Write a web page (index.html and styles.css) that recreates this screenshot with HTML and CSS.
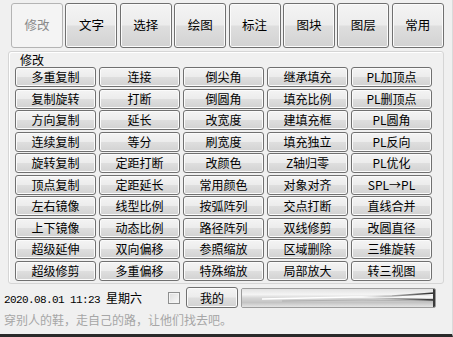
FILE: index.html
```html
<!DOCTYPE html>
<html lang="zh">
<head>
<meta charset="utf-8">
<title>工具箱</title>
<link rel="stylesheet" href="styles.css">
</head>
<body>
<div class="win">
  <div class="tabs">
    <button class="btn tab tab-off">修改</button>
    <button class="btn tab">文字</button>
    <button class="btn tab">选择</button>
    <button class="btn tab">绘图</button>
    <button class="btn tab">标注</button>
    <button class="btn tab">图块</button>
    <button class="btn tab">图层</button>
    <button class="btn tab">常用</button>
  </div>
  <div class="group">
    <div class="group-label">修改</div>
    <div class="grid">
      <button class="btn cell">多重复制</button><button class="btn cell">连接</button><button class="btn cell">倒尖角</button><button class="btn cell">继承填充</button><button class="btn cell">PL加顶点</button>
      <button class="btn cell">复制旋转</button><button class="btn cell">打断</button><button class="btn cell">倒圆角</button><button class="btn cell">填充比例</button><button class="btn cell">PL删顶点</button>
      <button class="btn cell">方向复制</button><button class="btn cell">延长</button><button class="btn cell">改宽度</button><button class="btn cell">建填充框</button><button class="btn cell">PL圆角</button>
      <button class="btn cell">连续复制</button><button class="btn cell">等分</button><button class="btn cell">刷宽度</button><button class="btn cell">填充独立</button><button class="btn cell">PL反向</button>
      <button class="btn cell">旋转复制</button><button class="btn cell">定距打断</button><button class="btn cell">改颜色</button><button class="btn cell">Z轴归零</button><button class="btn cell">PL优化</button>
      <button class="btn cell">顶点复制</button><button class="btn cell">定距延长</button><button class="btn cell">常用颜色</button><button class="btn cell">对象对齐</button><button class="btn cell">SPL→PL</button>
      <button class="btn cell">左右镜像</button><button class="btn cell">线型比例</button><button class="btn cell">按弧阵列</button><button class="btn cell">交点打断</button><button class="btn cell">直线合并</button>
      <button class="btn cell">上下镜像</button><button class="btn cell">动态比例</button><button class="btn cell">路径阵列</button><button class="btn cell">双线修剪</button><button class="btn cell">改圆直径</button>
      <button class="btn cell">超级延伸</button><button class="btn cell">双向偏移</button><button class="btn cell">参照缩放</button><button class="btn cell">区域删除</button><button class="btn cell">三维旋转</button>
      <button class="btn cell">超级修剪</button><button class="btn cell">多重偏移</button><button class="btn cell">特殊缩放</button><button class="btn cell">局部放大</button><button class="btn cell">转三视图</button>
    </div>
  </div>
  <div class="status">
    <span class="clock">2020.08.01 11:23 <span class="cjk">星期六</span></span>
    <span class="check"></span>
    <button class="btn mine">我的</button>
    <div class="progress">
      <svg width="193" height="18" viewBox="0 0 193 18">
        <defs>
          <linearGradient id="pg" x1="0" y1="0" x2="0" y2="1">
            <stop offset="0" stop-color="#e2e2e2"/>
            <stop offset="0.3" stop-color="#f4f4f4"/>
            <stop offset="0.5" stop-color="#d6d6d6"/>
            <stop offset="0.75" stop-color="#c4c4c4"/>
            <stop offset="1" stop-color="#e4e4e4"/>
          </linearGradient>
          <linearGradient id="fade" x1="0" y1="0" x2="1" y2="0">
            <stop offset="0" stop-color="#6a6a6a" stop-opacity="0"/>
            <stop offset="1" stop-color="#202020" stop-opacity="1"/>
          </linearGradient>
        </defs>
        <rect x="0" y="0" width="193" height="18" fill="url(#pg)"/>
        <path d="M20 10 L110 8 L193 8" stroke="#ffffff" stroke-width="1.5" fill="none"/>
        <path d="M40 12 L120 11 L193 12" stroke="#b0b0b0" stroke-width="1" fill="none"/>
        <path d="M120 8 L150 7 L193 4" stroke="url(#fade)" stroke-width="1.3" fill="none"/>
        <path d="M130 9 L160 10 L193 11" stroke="url(#fade)" stroke-width="1.3" fill="none"/>
        <rect x="191" y="0" width="2" height="18" fill="#3a3a3a"/>
      </svg>
    </div>
  </div>
  <div class="motto">穿别人的鞋，走自己的路，让他们找去吧。</div>
</div>
</body>
</html>
```
FILE: styles.css
```css
* { box-sizing: border-box; }
html, body {
  margin: 0;
  padding: 0;
  background: #f0f0f0;
}
body {
  width: 453px;
  height: 337px;
  overflow: hidden;
  font-family: "Noto Sans CJK SC", "Liberation Sans", sans-serif;
  font-size: 12px;
  color: #000;
}
.win {
  width: 453px;
  height: 337px;
  border-bottom: 3px solid #2a2a2a;
  border-right: 1px solid #dadada;
  display: flex;
  flex-direction: column;
}
.btn {
  font-family: "Noto Sans CJK SC", "Liberation Sans", sans-serif;
  font-size: 12px;
  color: #000;
  border: 1px solid #707070;
  border-radius: 3px;
  background: linear-gradient(#f4f4f4 0%, #ececec 48%, #dedede 52%, #d2d2d2 100%);
  box-shadow: inset 0 0 0 1px #fbfbfb;
  padding: 0;
  margin: 0;
  line-height: 1;
}
.tabs {
  display: flex;
  gap: 2.4px;
  padding: 3px 0 0 11px;
}
.tab {
  width: 52px;
  height: 45px;
  font-size: 12.5px;
}
.tab-off {
  background: #f4f4f4;
  border-color: #b4b4b4;
  box-shadow: none;
  color: #8a8a8a;
}
.group {
  margin: 3px 0 0 8px;
  width: 436px;
  height: 233px;
  border: 1px solid #d5d5d5;
  border-radius: 3px;
  box-shadow: 1px 1px 0 #ffffff inset;
  padding: 0 0 0 6px;
}
.group-label {
  height: 15px;
  line-height: 15px;
  margin-left: 5px;
  font-size: 12px;
}
.grid {
  display: grid;
  grid-template-columns: repeat(5, 81px);
  grid-auto-rows: 20px;
  column-gap: 3px;
  row-gap: 1.5px;
}
.cell {
  width: 81px;
  height: 20px;
}
.status {
  display: flex;
  align-items: center;
  height: 21px;
  margin-top: 3px;
  padding-left: 4px;
}
.clock {
  font-family: "Liberation Mono", monospace;
  font-size: 11px;
  letter-spacing: -0.6px;
  width: 164px;
}
.cjk {
  font-family: "Noto Sans CJK SC", sans-serif;
  font-size: 12px;
  letter-spacing: 0;
}
.check {
  width: 12px;
  height: 12px;
  border: 1px solid #8e8f8f;
  background: linear-gradient(135deg, #dcdcdc, #fafafa);
  box-shadow: inset 0 0 0 1px #f4f4f4;
}
.mine {
  width: 52px;
  height: 21px;
  margin-left: 6px;
  font-size: 12px;
}
.progress {
  width: 195px;
  height: 20px;
  margin-left: 3px;
  border: 1px solid #9c9c9c;
  border-radius: 2px;
  overflow: hidden;
  display: flex;
}
.motto {
  margin-top: 5px;
  padding-left: 4px;
  color: #a6a6a6;
  font-size: 12px;
  line-height: 14px;
}
```
